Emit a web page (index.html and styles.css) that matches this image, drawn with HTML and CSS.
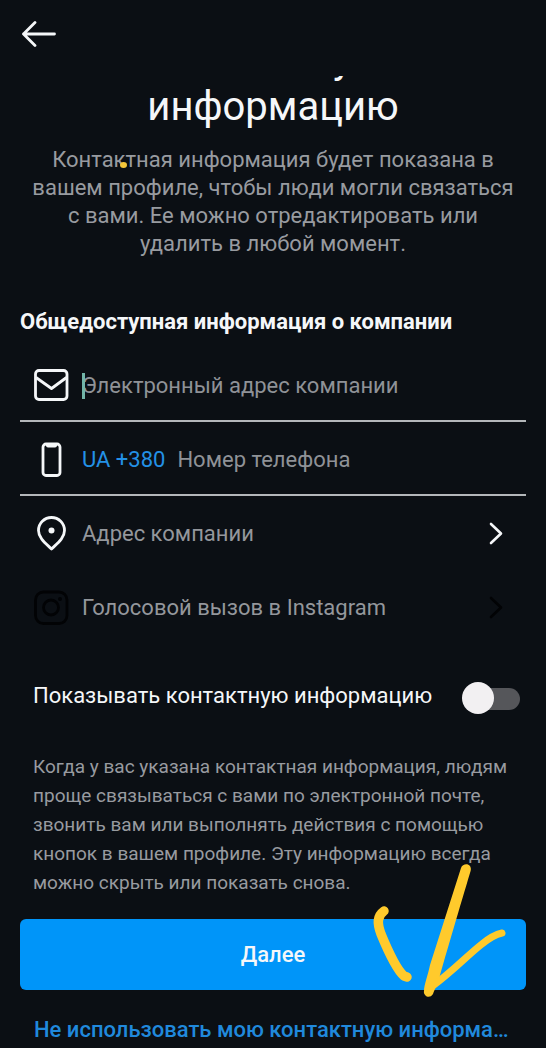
FILE: index.html
```html
<!DOCTYPE html>
<html lang="ru">
<head>
<meta charset="utf-8">
<meta name="viewport" content="width=device-width, initial-scale=1">
<title>Контактная информация</title>
<link rel="stylesheet" href="styles.css">
</head>
<body>
<div class="screen">
  <header class="topbar">
    <button class="back" type="button" aria-label="Назад">
      <svg width="34" height="28" viewBox="0 0 34 28" fill="none" stroke="currentColor" stroke-width="2.800" stroke-linecap="round" stroke-linejoin="round"><path d="M32.500 14H1.500M13 2.500 1.500 14l11.500 11.500"/></svg>
    </button>
  </header>
  <main class="content">
    <div class="title-clip">
      <h1 class="title">контактную<br>информацию</h1>
    </div>
    <p class="lead">Контактная информация будет показана в вашем профиле, чтобы люди могли связаться с вами. Ее можно отредактировать или удалить в любой момент.<span class="dot"></span></p>

    <h2 class="section-title">Общедоступная информация о компании</h2>
    <div class="row row-line">
      <label class="icon" for="email" aria-label="Электронный адрес">
        <svg width="36" height="36" viewBox="0 0 36 36" fill="none" stroke="currentColor" stroke-width="2.800" stroke-linejoin="round"><rect x="2.500" y="2.500" width="31.500" height="29" rx="3.500"/><path d="M3 9.500 18.500 20.500 33.500 9.500"/></svg>
      </label>
      <div class="field"><span class="caret"></span><input class="input" id="email" type="email" placeholder="Электронный адрес компании"></div>
    </div>
    <div class="row row-line">
      <label class="icon" for="phone" aria-label="Номер телефона">
        <svg width="36" height="36" viewBox="0 0 36 36" fill="none" stroke="currentColor" stroke-width="2.800" stroke-linejoin="round"><rect x="10" y="2" width="17" height="31.500" rx="3"/><path d="M13 2h11v1.500q0 2-2 2h-7q-2 0-2-2z" fill="currentColor" stroke="none"/></svg>
      </label>
      <button class="code" type="button">UA +380</button>
      <input class="input" id="phone" type="tel" placeholder="Номер телефона">
    </div>
    <button class="row" type="button">
      <span class="icon">
        <svg width="36" height="36" viewBox="0 0 36 36" fill="none" stroke="currentColor" stroke-width="2.800" stroke-linejoin="round"><path d="M18.500 33C13.500 28 5.500 22.500 5.500 14.500a13 13 0 0 1 26 0c0 8-8 13.500-13 18.500z"/><circle cx="18.500" cy="14.500" r="3" fill="currentColor" stroke="none"/></svg>
      </span>
      <span class="label">Адрес компании</span>
      <svg class="chevron" width="14" height="24" viewBox="0 0 14 24" fill="none" stroke="currentColor" stroke-width="2.600" stroke-linecap="round" stroke-linejoin="round"><path d="M2 2 12 11.500 2 21"/></svg>
    </button>
    <button class="row" type="button">
      <span class="icon icon-off">
        <svg width="36" height="36" viewBox="0 0 36 36" fill="none" stroke="currentColor" stroke-width="2.800"><rect x="2.500" y="2" width="31.500" height="31.500" rx="8"/><circle cx="18" cy="17.500" r="7.500"/><circle cx="27" cy="9" r="2" fill="currentColor" stroke="none"/></svg>
      </span>
      <span class="label">Голосовой вызов в Instagram</span>
      <svg class="chevron icon-off" width="14" height="24" viewBox="0 0 14 24" fill="none" stroke="currentColor" stroke-width="2.600" stroke-linecap="round" stroke-linejoin="round"><path d="M2 2 12 11.500 2 21"/></svg>
    </button>

    <div class="toggle-row">
      <label for="show">Показывать контактную информацию</label>
      <input class="switch" id="show" type="checkbox" role="switch">
    </div>
    <p class="note">Когда у вас указана контактная информация, людям проще связываться с вами по электронной почте, звонить вам или выполнять действия с помощью кнопок в вашем профиле. Эту информацию всегда можно скрыть или показать снова.</p>
  </main>
  <footer class="actions">
    <button class="primary" type="button">Далее</button>
    <a class="skip" href="#">Не использовать мою контактную информацию</a>
    <svg class="scribble" width="140" height="140" viewBox="0 0 140 140" fill="none" stroke="currentColor" stroke-linecap="round" stroke-linejoin="round"><path d="M12 48C5 53 5 60 9 71C16 88 24 106 32 113L35 114" stroke-width="9.500"/><path d="M89 5C91 -1 102 0 98 10C89 40 74 91 67 116C65 122 62 128 61 131C57 137 51 132 52 128C52 122 56 112 58 102Z" fill="currentColor" stroke="none"/><path d="M62 122C82 107 97 91 110 81Q121 72 130 70" stroke-width="7"/></svg>
  </footer>
</div>
</body>
</html>
```

FILE: styles.css
```css
* { box-sizing: border-box; }

body {
  margin: 0;
  background: #0b0f14;
  color: #f5f7f9;
  font-family: Roboto, "Noto Sans", sans-serif;
  font-size: 22px;
  line-height: 28px;
}

button, input {
  font: inherit;
  color: inherit;
  background: none;
  border: 0;
  padding: 0;
  margin: 0;
}

h1, h2, p { margin: 0; }
svg { display: block; }

.topbar {
  display: flex;
  padding: 20px 22px 28px;
}

.content { padding: 0 20px; }

/* The title is scrolled part-way under the top bar. */
.title-clip {
  display: flex;
  align-items: flex-end;
  justify-content: center;
  height: 54px;
  overflow: hidden;
}

.title {
  font-size: 40px;
  line-height: 47px;
  font-weight: 400;
  text-align: center;
}

.lead {
  position: relative;
  padding: 16px 12px 0;
  text-align: center;
  color: #989ba0;
}

.dot {
  position: absolute;
  left: 100px;
  top: 32px;
  width: 7px;
  height: 6px;
  border-radius: 50%;
  background: #f4c63a;
}

.section-title {
  margin: 50px 0 12px;
  font-size: 22px;
  font-weight: 700;
}

.row {
  display: flex;
  align-items: center;
  width: 100%;
  height: 74px;
  padding: 2px 0 0 13px;
  text-align: left;
}

.row-line {
  padding-top: 4px;
  border-bottom: 2px solid #b4b7ba;
}

.icon {
  flex: none;
  margin-right: 13px;
  color: #f5f7f9;
}

.icon-off { color: #020305; }

.field {
  position: relative;
  display: flex;
  flex: 1;
}

.caret {
  position: absolute;
  left: 0;
  top: 1px;
  width: 3px;
  height: 26px;
  background: #72b5a8;
}

.input {
  flex: 1;
  min-width: 0;
  outline: 0;
}

.input::placeholder { color: #8f9297; opacity: 1; }

.code {
  margin-right: 12px;
  color: #2391e6;
}

.label {
  flex: 1;
  color: #94979c;
}

.chevron { margin-right: 23px; }

.toggle-row {
  display: flex;
  align-items: flex-end;
  justify-content: space-between;
  padding: 38px 6px 0 13px;
}

.toggle-row label { padding-bottom: 4px; }

.switch {
  appearance: none;
  position: relative;
  width: 58px;
  height: 32px;
}

.switch::before {
  content: "";
  position: absolute;
  inset: 6px 0 4px 10px;
  border-radius: 11px;
  background: #55565a;
}

.switch::after {
  content: "";
  position: absolute;
  left: 0;
  top: 0;
  width: 32px;
  height: 32px;
  border-radius: 50%;
  background: #f2f0f2;
}

.note {
  padding: 38px 13px 0;
  font-size: 19px;
  line-height: 29px;
  color: #989ba0;
}

.actions {
  position: relative;
  padding: 22px 20px 0;
  font-weight: 500;
}

.primary {
  display: block;
  width: 100%;
  height: 71px;
  border-radius: 6px;
  background: #0095f9;
  font-weight: 500;
}

.skip {
  display: block;
  margin: 26px 14px 0;
  overflow: hidden;
  text-overflow: ellipsis;
  white-space: nowrap;
  text-align: center;
  text-decoration: none;
  color: #2089dc;
}

/* Hand-drawn arrow over the primary button. */
.scribble {
  position: absolute;
  right: 34px;
  top: -34px;
  color: #ffca2c;
  pointer-events: none;
}
```
